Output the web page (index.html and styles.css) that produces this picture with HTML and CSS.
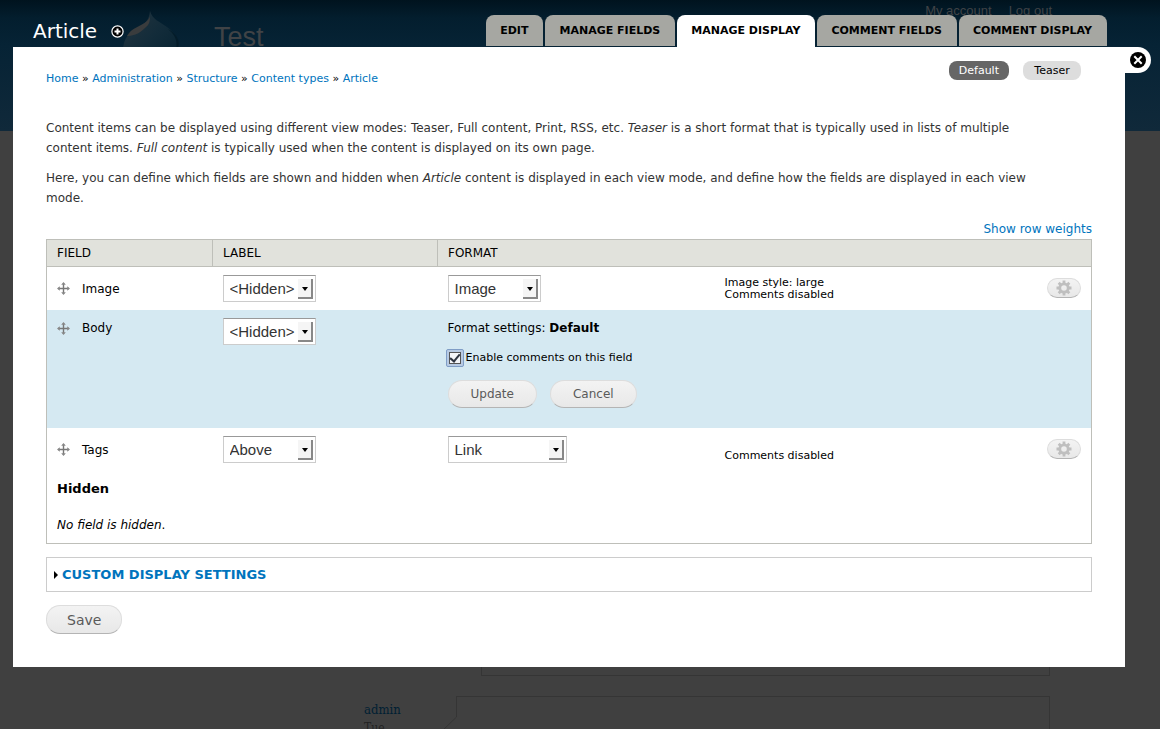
FILE: index.html
```html
<!DOCTYPE html>
<html lang="en">
<head>
<meta charset="utf-8">
<title>Article | Manage display</title>
<link rel="stylesheet" href="styles.css">
</head>
<body>
<svg class="defs" aria-hidden="true">
  <symbol id="move" viewBox="0 0 13 13"><path d="M6.5 1v11M1 6.5h11" stroke="#777" stroke-width="1.4" fill="none"/><path d="M6.500 0l2.300 2.800h-4.600zM6.500 13l2.300-2.800h-4.600zM0 6.500l2.800-2.300v4.600zM13 6.500l-2.800-2.300v4.600z" fill="#888"/></symbol>
  <symbol id="gear" viewBox="0 0 16 16"><path d="M8 .5v3M8 12.500v3M.5 8h3M12.500 8h3M2.700 2.700l2.200 2.200M11.100 11.100l2.200 2.200M13.300 2.700l-2.200 2.200M4.900 11.100l-2.200 2.200" stroke="#bfbfbf" stroke-width="2.800"/><circle cx="8" cy="8" r="4.200" fill="none" stroke="#bfbfbf" stroke-width="2.800"/></symbol>
</svg>

<div class="site" aria-hidden="true">
  <div class="site-header">
    <svg class="site-logo" viewBox="0 0 58 66">
      <defs><linearGradient id="drop" x1="0" y1="0" x2="1" y2="1"><stop offset="0" stop-color="#24343e"/><stop offset=".45" stop-color="#132c3a"/><stop offset="1" stop-color="#03202f"/></linearGradient></defs>
      <path d="M27 0c2 8 10 11 17 16 8 6 13 13 13 24a28 26 0 0 1-57 0c0-13 7-20 16-24 6-3 10-7 11-16z" fill="url(#drop)"/>
      <path d="M27 5c0 6-1 9-5 12-6 6-12 8-18 8 4-7 9-8 14-11 5-3 8-5 9-9z" fill="#3a3c3d"/>
      <path d="M45 18c7 6 11 12 7 24 7-8 4-18-7-24z" fill="#041c29"/>
    </svg>
    <span class="site-name">Test</span>
    <span class="site-links"><span>My account</span><span>Log out</span></span>
  </div>
  <div class="site-box site-box-first"></div>
  <div class="site-box site-box-comment"></div>
  <svg class="site-tail" viewBox="0 0 15 15"><path d="M14.500 0v1L0 15" fill="none" stroke="#353535"/></svg>
  <div class="site-author">admin<br><span class="site-date">Tue</span></div>
</div>

<div class="overlay">
  <header class="titlebar">
    <h1 class="title">Article</h1>
    <button class="shortcut" type="button" aria-label="Add to shortcuts"><svg viewBox="0 0 13 13"><circle cx="6.500" cy="6.500" r="5.600" fill="#000" stroke="#fff" stroke-width="1.200"/><path d="M6.500 3.500v6M3.500 6.500h6" stroke="#fff" stroke-width="2"/></svg></button>
    <nav class="tabs">
      <a class="tab" href="#">Edit</a>
      <a class="tab" href="#">Manage fields</a>
      <a class="tab tab-active" href="#">Manage display</a>
      <a class="tab" href="#">Comment fields</a>
      <a class="tab" href="#">Comment display</a>
    </nav>
  </header>

  <main class="content">
    <button class="close" type="button" aria-label="Close overlay"><svg viewBox="0 0 16 16"><circle cx="8" cy="8" r="8" fill="#000"/><path d="M4.300 4.300l7.400 7.400M11.700 4.300l-7.400 7.400" stroke="#fff" stroke-width="2"/></svg></button>
    <div class="topline">
      <nav class="breadcrumb"><a href="#">Home</a> » <a href="#">Administration</a> » <a href="#">Structure</a> » <a href="#">Content types</a> » <a href="#">Article</a></nav>
      <nav class="modes"><a class="mode mode-active" href="#">Default</a><a class="mode" href="#">Teaser</a></nav>
    </div>
    <div class="help">
      <p>Content items can be displayed using different view modes: Teaser, Full content, Print, RSS, etc. <em>Teaser</em> is a short format that is typically used in lists of multiple content items. <em>Full content</em> is typically used when the content is displayed on its own page.</p>
      <p>Here, you can define which fields are shown and hidden when <em>Article</em> content is displayed in each view mode, and define how the fields are displayed in each view mode.</p>
    </div>
    <div class="weights"><a href="#">Show row weights</a></div>

    <table class="fields">
      <colgroup><col class="col-field"><col class="col-label"><col class="col-format"><col><col class="col-gear"></colgroup>
      <thead><tr><th>Field</th><th>Label</th><th colspan="3">Format</th></tr></thead>
      <tbody>
        <tr class="row">
          <td class="name"><span class="field"><svg class="move"><use href="#move"/></svg>Image</span></td>
          <td><span class="select"><select aria-label="Image label"><option>&lt;Hidden&gt;</option></select></span></td>
          <td><span class="select"><select aria-label="Image format"><option>Image</option></select></span></td>
          <td class="summary">Image style: large<br>Comments disabled</td>
          <td class="actions"><button class="gear" type="button" aria-label="Edit Image"><svg><use href="#gear"/></svg></button></td>
        </tr>
        <tr class="row row-editing">
          <td><span class="field"><svg class="move"><use href="#move"/></svg>Body</span></td>
          <td><span class="select"><select aria-label="Body label"><option>&lt;Hidden&gt;</option></select></span></td>
          <td colspan="3">
            <div class="settings-title">Format settings: <strong>Default</strong></div>
            <div class="check"><input id="comments" type="checkbox" checked><label for="comments">Enable comments on this field</label></div>
            <div class="buttons"><button class="button" type="button">Update</button><button class="button" type="button">Cancel</button></div>
          </td>
        </tr>
        <tr class="row">
          <td class="name"><span class="field"><svg class="move"><use href="#move"/></svg>Tags</span></td>
          <td><span class="select"><select aria-label="Tags label"><option>Above</option></select></span></td>
          <td><span class="select select-wide"><select aria-label="Tags format"><option>Link</option></select></span></td>
          <td class="summary"><br>Comments disabled</td>
          <td class="actions"><button class="gear" type="button" aria-label="Edit Tags"><svg><use href="#gear"/></svg></button></td>
        </tr>
        <tr><td class="region" colspan="5">Hidden</td></tr>
        <tr><td class="empty" colspan="5"><em>No field is hidden</em>.</td></tr>
      </tbody>
    </table>

    <section class="custom"><svg class="triangle" viewBox="0 0 4 8"><path d="M0 0l4 4-4 4z"/></svg><a href="#">Custom display settings</a></section>
    <button class="button button-save" type="button">Save</button>
  </main>
</div>
</body>
</html>
```

FILE: styles.css
```css
*, *::before, *::after { box-sizing: border-box; }
body {
  margin: 0;
  min-height: 100vh;
  position: relative;
  overflow: hidden;
  background: #404040;
  color: #000;
  font: 12px/20px "DejaVu Sans", sans-serif;
}
a { color: #0074bd; text-decoration: none; }
button { font-family: inherit; cursor: pointer; }
svg { display: block; }
.defs { position: absolute; width: 0; height: 0; }

/* dimmed site behind the overlay */
.site { position: absolute; inset: 0; overflow: hidden; }
.site-header {
  height: 131px;
  background: linear-gradient(#00131e, #031e2e 18px, #062335 45px, #10293a);
  color: #404346;
  font-family: "Liberation Sans", Arial, sans-serif;
}
.site-logo { position: absolute; left: 123px; top: 11px; width: 58px; height: 66px; }
.site-name { position: absolute; left: 214px; top: 22px; font-size: 27px; line-height: 30px; }
.site-links { position: absolute; right: 108px; top: 3px; display: flex; gap: 17px; font-size: 13px; line-height: 16px; }
.site-box { position: absolute; right: 110px; border: 1px solid #353535; }
.site-box-first { left: 481px; top: 600px; height: 76px; }
.site-box-comment { left: 456px; top: 696px; height: 60px; border-left: 0; }
.site-box-comment::before { content: ""; position: absolute; left: 0; top: 0; height: 20px; border-left: 1px solid #353535; }
.site-tail { position: absolute; left: 442px; top: 716px; width: 15px; height: 15px; }
.site-author { position: absolute; left: 364px; top: 701px; color: #001f33; font: 13px/18px "DejaVu Serif Condensed", "DejaVu Serif", serif; }
.site-date { color: #222; font-size: 12px; }

/* overlay */
.overlay { position: relative; margin: 0 35px 0 13px; }
.titlebar { display: flex; align-items: flex-end; height: 47px; padding: 0 18px 0 20px; }
.title { margin: 0; color: #fff; font-size: 20px; font-weight: normal; line-height: 32px; }
.shortcut { margin: 0 0 9px 14px; padding: 0; border: 0; background: none; }
.shortcut svg { width: 13px; height: 13px; }
.tabs { display: flex; gap: 2px; margin-left: auto; }
.tab {
  height: 31px;
  margin-bottom: 1px;
  padding: 0 15px 0 14px;
  border-radius: 8px 8px 0 0;
  background: #a6a7a2;
  color: #000;
  font-size: 11px;
  font-weight: bold;
  line-height: 31px;
  text-transform: uppercase;
}
.tab-active { height: 32px; margin-bottom: 0; background: #fff; }

.content { position: relative; padding: 12px 33px 33px; background: #fff; }
.close {
  position: absolute;
  left: 100%;
  top: 0;
  width: 26px;
  height: 26px;
  padding: 0 0 0 5px;
  border: 0;
  border-radius: 0 13px 13px 0;
  background: #fff;
}
.close svg { width: 16px; height: 16px; }
.topline { display: flex; justify-content: space-between; }
.breadcrumb { padding-top: 10px; font-size: 11px; }
.modes { display: flex; gap: 14px; padding: 2px 11px 0 0; }
.mode { min-width: 58px; height: 19px; padding: 0 10px; border-radius: 8px; background: #ddd; color: #000; font-size: 11px; line-height: 19px; text-align: center; }
.mode-active { background: #666; color: #fff; }
.help { margin-top: 29px; padding-right: 36px; color: #333; }
.help p { margin: 0 0 10px; }
.weights { padding-top: 1px; text-align: right; }

/* field table */
.fields { width: 100%; border: 1px solid #bebfb9; border-collapse: collapse; table-layout: fixed; }
.col-field { width: 166px; }
.col-label { width: 225px; }
.col-format { width: 277px; }
.col-gear { width: 54px; }
.fields th {
  padding: 3px 10px;
  border: 1px solid #bebfb9;
  background: #e1e2dc;
  font-weight: normal;
  line-height: 20px;
  text-align: left;
  text-transform: uppercase;
}
.fields td { padding: 8px 10px; vertical-align: top; }
.fields .name { vertical-align: middle; }
.row-editing { background: #d5e9f2; }
.field { display: flex; align-items: center; gap: 12px; }
.move { width: 13px; height: 13px; }
.select { position: relative; display: block; width: 93px; }
.select-wide { width: 119px; }
.select select {
  appearance: none;
  display: block;
  width: 100%;
  height: 27px;
  padding: 0 18px 0 6px;
  border: 1px solid #ccc;
  border-top-color: #999;
  border-radius: 0;
  background: #fff;
  color: #333;
  font: 15px/24px "Liberation Sans", Arial, sans-serif;
}
.select::before {
  content: "";
  position: absolute;
  right: 3px;
  top: 4px;
  width: 15px;
  height: 20px;
  border: solid #888;
  border-width: 0 2px 2px 0;
  background: #f5f5f5;
  pointer-events: none;
}
.select::after {
  content: "";
  position: absolute;
  right: 8px;
  top: 12px;
  border: 3px solid transparent;
  border-top: 4px solid #000;
  border-bottom: 0;
  pointer-events: none;
}
.fields .summary { font-size: 11px; line-height: 12px; padding-top: 10px; }
.fields .actions { padding: 11px 10px; }
.gear {
  display: flex;
  align-items: center;
  justify-content: center;
  width: 34px;
  height: 20px;
  margin-left: auto;
  padding: 0;
  border: 1px solid #ddd;
  border-bottom-color: #b4b4b4;
  border-radius: 10px;
  background: linear-gradient(#f3f3f3, #e8e8e8);
}
.gear svg { width: 16px; height: 16px; }
.settings-title { height: 28px; }
.check { display: flex; align-items: center; gap: 2px; height: 24px; margin-left: -2px; font-size: 11px; }
.check input {
  appearance: none;
  position: relative;
  width: 18px;
  height: 18px;
  margin: 0;
  border: 1px solid #7f9dc6;
  border-radius: 2px;
  background: #b7cae3;
}
.check input::before { content: ""; position: absolute; inset: 2px; border: 1px solid #555; background: #f4f5f8; }
.check input:checked::after {
  content: "";
  position: absolute;
  left: 5px;
  top: 2px;
  width: 6px;
  height: 10px;
  border: solid #2e3440;
  border-width: 0 2px 2px 0;
  transform: rotate(40deg);
}
.buttons { display: flex; gap: 13px; padding: 10px 0 12px; }
.button {
  height: 28px;
  padding: 0 22px;
  border: 1px solid #ddd;
  border-bottom-color: #b4b4b4;
  border-radius: 14px;
  background: linear-gradient(#f3f3f3, #e8e8e8);
  color: #5a5a5a;
  font-size: 12px;
}
.fields .region { padding: 8px 10px; font-size: 13px; font-weight: bold; }
.fields .empty { padding: 8px 10px; }

.custom { display: flex; align-items: center; gap: 4px; height: 35px; margin: 13px 0; padding: 0 7px; border: 1px solid #ccc; font-size: 13px; font-weight: bold; text-transform: uppercase; }
.triangle { width: 4px; height: 8px; }
.button-save { display: block; height: 29px; padding: 0 20px; font-size: 14px; }
```
